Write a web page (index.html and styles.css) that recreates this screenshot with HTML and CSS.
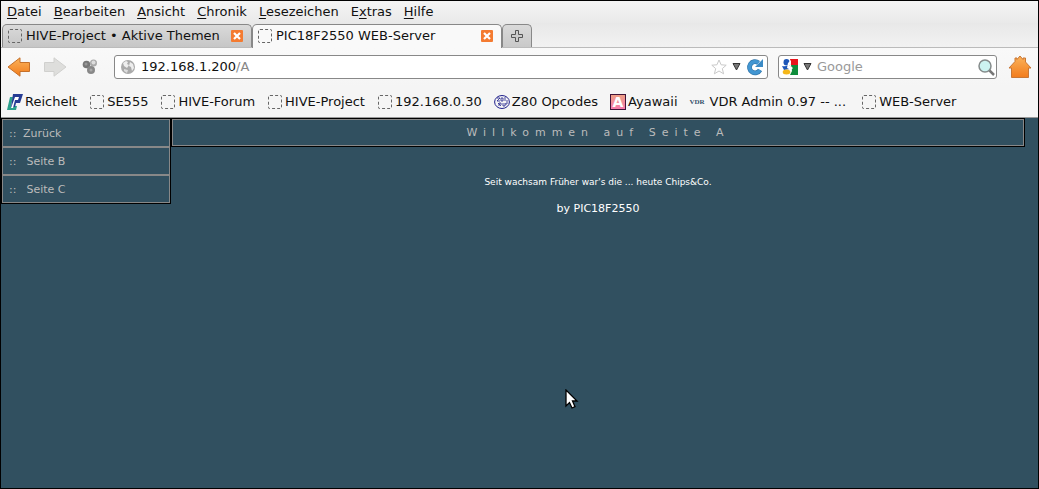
FILE: index.html
```
<!DOCTYPE html>
<html lang="de">
<head>
    <meta charset="UTF-8">
    <meta name="viewport" content="width=device-width, initial-scale=1.0">
    <title>PIC18F2550 WEB-Server</title>
    <link rel="stylesheet" href="styles.css">
</head>
<body>
    <!-- Menu bar -->
    <nav class="menubar">
        <button><u>D</u>atei</button>
        <button><u>B</u>earbeiten</button>
        <button><u>A</u>nsicht</button>
        <button><u>C</u>hronik</button>
        <button><u>L</u>esezeichen</button>
        <button>E<u>x</u>tras</button>
        <button><u>H</u>ilfe</button>
    </nav>

    <!-- Tabs -->
    <div class="tabs">
        <div class="tab">
            <span class="blank-icon"></span>
            <button class="tab-title">HIVE-Project • Aktive Themen</button>
            <button class="close" aria-label="Tab schließen">
                <svg width="12" height="12" viewBox="0 0 12 12"><rect width="12" height="12" rx="1" fill="#f47b31"/><path d="M3 3l6 6M9 3l-6 6" stroke="#fff" stroke-width="2.2"/></svg>
            </button>
        </div>
        <div class="tab active">
            <span class="blank-icon"></span>
            <button class="tab-title">PIC18F2550 WEB-Server</button>
            <button class="close" aria-label="Tab schließen">
                <svg width="12" height="12" viewBox="0 0 12 12"><rect width="12" height="12" rx="1" fill="#f47b31"/><path d="M3 3l6 6M9 3l-6 6" stroke="#fff" stroke-width="2.2"/></svg>
            </button>
        </div>
        <button class="new-tab" aria-label="Neuer Tab">
            <svg width="12" height="12" viewBox="0 0 12 12"><path d="M4.5 .5h3v4h4v3h-4v4h-3v-4h-4v-3h4z" fill="#ccc" stroke="#555"/></svg>
        </button>
    </div>

    <!-- Navigation bar -->
    <div class="navbar">
        <button class="nav-button" aria-label="Zurück">
            <svg width="24" height="20" viewBox="0 0 24 20"><defs><linearGradient id="orange" x2="0" y2="1"><stop offset="0" stop-color="#fbb35b"/><stop offset="1" stop-color="#f27c1c"/></linearGradient></defs><path d="M1 10L13 .8v4.7h9.5v9H13v4.7z" fill="url(#orange)" stroke="#c5702a"/></svg>
        </button>
        <button class="nav-button forward" aria-label="Vor" disabled>
            <svg width="24" height="20" viewBox="0 0 24 20"><path d="M23 10L11 .8v4.7H1.5v9H11v4.7z" fill="#dededc" stroke="#d0d0ce"/></svg>
        </button>
        <button class="nav-button tools" aria-label="Werkzeuge">
            <svg width="16" height="16" viewBox="0 0 16 16"><circle cx="4.5" cy="5.5" r="3.8" fill="#777"/><circle cx="4" cy="5" r="1.5" fill="#999"/><circle cx="11.5" cy="4" r="3.5" fill="#aaa"/><circle cx="11.5" cy="3.5" r="2" fill="#ddd"/><circle cx="9" cy="11" r="4" fill="#888"/><circle cx="9" cy="11" r="1.5" fill="#aaa"/></svg>
        </button>
        <div class="address">
            <svg width="16" height="16" viewBox="0 0 16 16"><circle cx="8" cy="8" r="7" fill="#aaa"/><path d="M3 4l3-2 2 1-1 2 2 1-2 3-3-2zM10 3l3 2 1 4-2 3-1-4-2-1z" fill="#eee"/><path d="M4 10l4 1-1 3-3-2z" fill="#ddd"/></svg>
            <div class="url" role="textbox" contenteditable="true" aria-label="Adresse">192.168.1.200<span>/A</span></div>
            <button aria-label="Lesezeichen setzen">
                <svg width="16" height="16" viewBox="0 0 16 16"><path d="M8 1l2.1 4.8 5.1.4-3.9 3.4 1.3 5.2L8 12l-4.6 2.8 1.3-5.2L.8 6.2l5.1-.4z" fill="#fff" stroke="#c9c9c9"/></svg>
            </button>
            <button aria-label="Verlauf">
                <svg width="9" height="8" viewBox="0 0 9 8"><path d="M1 .5h7L4.5 7z" fill="#777" stroke="#333"/></svg>
            </button>
            <button aria-label="Neu laden">
                <svg width="18" height="18" viewBox="0 0 18 18"><path d="M12.5 4.8A5.6 5.6 0 1 0 14 12" fill="none" stroke="#3579ad" stroke-width="4.8"/><path d="M17 1v8H9z" fill="#3c8bc6"/><path d="M12.5 4.8A5.6 5.6 0 1 0 14 12" fill="none" stroke="#4296d2" stroke-width="3.4"/></svg>
            </button>
        </div>
        <div class="search">
            <svg width="16" height="16" viewBox="0 0 16 16"><path d="M8 0h8v6H9z" fill="#e8141c"/><path d="M9 6h7v10H8l2-4z" fill="#0e8d3c"/><ellipse cx="4.5" cy="3.2" rx="3" ry="3.2" fill="#1b55b8"/><path d="M0 7q3 1 7-1l2 2-1 2-6 1z" fill="#1b55b8"/><path d="M6 4l3-3v4l-2 1 4 3-2 2-4-2z" fill="#fff"/><ellipse cx="4.5" cy="13" rx="3.8" ry="2.5" fill="#f5b719"/></svg>
            <button aria-label="Suchmaschine wählen">
                <svg width="9" height="8" viewBox="0 0 9 8"><path d="M1 .5h7L4.5 7z" fill="#777" stroke="#333"/></svg>
            </button>
            <input type="text" placeholder="Google" aria-label="Suche">
            <button aria-label="Suchen">
                <svg width="18" height="18" viewBox="0 0 18 18"><path d="M12 12l5 5" stroke="#777" stroke-width="2.5"/><circle cx="8" cy="8" r="6" fill="#cdf3f1" stroke="#858b8b" stroke-width="1.5"/></svg>
            </button>
        </div>
        <button class="nav-button home" aria-label="Startseite">
            <svg width="24" height="24" viewBox="0 0 24 24"><path d="M1 13L7 6.5V3h2v1.5L12 1l3 3.5V3h2.500v4L23 13h-2.500v9.500h-17V13z" fill="url(#orange)" stroke="#c97735"/></svg>
        </button>
    </div>

    <!-- Bookmarks -->
    <nav class="bookmarks">
        <a href="#"><svg width="16" height="16" viewBox="0 0 16 16"><path d="M3 3h3L4 12h6l-1 4H0z" fill="#2ba08c"/><path d="M6 0h10l-3 9H9l-1 4H4z" fill="#263c94"/><path d="M8 3h4l-1 3H8l-2 8H4z" fill="#fff"/></svg>Reichelt</a>
        <a href="#"><span class="blank-icon"></span>SE555</a>
        <a href="#"><span class="blank-icon"></span>HIVE-Forum</a>
        <a href="#"><span class="blank-icon"></span>HIVE-Project</a>
        <a href="#"><span class="blank-icon"></span>192.168.0.30</a>
        <a href="#"><svg width="16" height="16" viewBox="0 0 16 16"><g fill="none" stroke="#20208c"><ellipse cx="8" cy="8" rx="7.4" ry="6.5"/><path d="M3 4h3L3 7h3M7 4v3h2V4zM11 3v4M4 9l3 3M5 12V9h2v2M9 9v3h2V9M13 6v4h-2" stroke-width=".8"/></g></svg>Z80 Opcodes</a>
        <a href="#"><svg width="16" height="16" viewBox="0 0 16 16"><defs><linearGradient id="pink" x2="0" y2="1"><stop offset="0" stop-color="#eda184"/><stop offset="1" stop-color="#f779ad"/></linearGradient></defs><rect x=".5" y=".5" width="15" height="15" fill="url(#pink)" stroke="#411337"/><text class="icon-letter" x="8" y="13" text-anchor="middle" fill="#fff">A</text></svg>Ayawaii</a>
        <a href="#" class="vdr"><span class="vdr-icon">VDR</span>VDR Admin 0.97 -- ...</a>
        <a href="#"><span class="blank-icon"></span>WEB-Server</a>
    </nav>

    <!-- Page content -->
    <main class="page">
        <ul class="side-menu">
            <li><a href="#"><span class="marker">::</span> Zurück</a></li>
            <li><a href="#"><span class="marker">::</span>&nbsp; Seite B</a></li>
            <li><a href="#"><span class="marker">::</span>&nbsp; Seite C</a></li>
        </ul>
        <section class="content">
            <h1>Willkommen auf Seite A</h1>
            <p class="slogan">Seit wachsam Früher war's die ... heute Chips&amp;Co.</p>
            <p class="author">by PIC18F2550</p>
        </section>
        <!-- Mouse pointer -->
        <svg class="pointer" width="14" height="21" viewBox="0 0 14 21"><path d="M1 1v16l3.5-3.5L7 19l3-1.3L7.5 12H12z" fill="#fff" stroke="#000" stroke-width="1.3"/></svg>
    </main>
</body>
</html>
```
FILE: styles.css
```
* {
    box-sizing: border-box;
}
body {
    margin: 0;
    min-height: 100vh;
    display: flex;
    flex-direction: column;
    border: 1px solid #000;
    background: #f5f5f5;
    color: #111;
    font: 13px/20px "DejaVu Sans", sans-serif;
}
button, input {
    font: inherit;
    color: inherit;
    background: none;
    border: 0;
    padding: 0;
}
svg {
    display: block;
    flex: none;
}
a {
    color: inherit;
    text-decoration: none;
}
.menubar {
    display: flex;
    gap: 12px;
    height: 22px;
    padding: 0 6px;
    background: linear-gradient(#f4f4f4, #e9e9e9);
}
.menubar u {
    text-underline-offset: 2px;
}
.tabs {
    display: flex;
    height: 25px;
    padding: 1px 1px 0;
    background: linear-gradient(#e8e8e8, #f2f2f2);
    border-bottom: 1px solid #bbb;
}
.tab {
    display: flex;
    align-items: center;
    gap: 4px;
    width: 250px;
    padding: 0 8px 0 5px;
    background: linear-gradient(#dadada, #c6c6c6);
    border: 1px solid #888;
    border-bottom: 0;
    border-radius: 5px 5px 0 0;
}
.tab.active {
    background: #f9f9f9;
    margin-bottom: -1px;
    padding-bottom: 1px;
}
.tab-title {
    flex: 1;
    text-align: left;
    white-space: nowrap;
}
.blank-icon {
    flex: none;
    width: 14px;
    height: 14px;
    border: 1px dashed #666;
    border-radius: 2px;
}
.new-tab {
    display: flex;
    align-items: center;
    justify-content: center;
    width: 30px;
    background: linear-gradient(#dadada, #c9c9c9);
    border: 1px solid #888;
    border-bottom: 0;
    border-radius: 5px 5px 0 0;
}
.navbar {
    display: flex;
    align-items: center;
    height: 39px;
    padding: 0 6px 1px;
    background: linear-gradient(#f9f9f9, #f5f5f5);
}
.forward {
    margin-left: 12px;
}
.tools {
    margin: 0 16px 0 15px;
}
.address, .search {
    display: flex;
    align-items: center;
    height: 24px;
    padding: 0 3px;
    background: #fff;
    border: 1px solid #888;
    border-radius: 3px;
}
.address {
    flex: 1;
    gap: 5px;
    padding-left: 5px;
}
.url {
    flex: 1;
    outline: 0;
}
.url span {
    color: #888;
}
.search {
    width: 219px;
    gap: 5px;
    margin: 0 11px 0 10px;
    padding: 0 1px 0 3px;
}
.search input {
    flex: 1;
    min-width: 0;
    outline: 0;
}
.search input::placeholder {
    color: #999;
}
.bookmarks {
    display: flex;
    align-items: center;
    gap: 12px;
    height: 31px;
    padding: 0 6px 1px;
    border-bottom: 1px solid #999;
    white-space: nowrap;
}
.bookmarks a {
    display: flex;
    align-items: center;
    gap: 2px;
}
.bookmarks .blank-icon {
    margin: 0 1px;
}
.bookmarks .vdr {
    gap: 4px;
    margin-right: 3px;
}
.vdr-icon {
    width: 16px;
    color: #35506b;
    font: bold 7px/16px "Liberation Serif", serif;
}
.icon-letter {
    font-size: 14px;
    font-weight: bold;
}
.page {
    flex: 1;
    position: relative;
    display: flex;
    align-items: flex-start;
    padding-right: 13px;
    background: #315060;
    color: #fff;
    font-size: 11px;
}
.side-menu {
    width: 170px;
    margin: 0;
    padding: 0;
    list-style: none;
    border: 1px solid #000;
}
.side-menu a {
    display: block;
    padding: 4px 6px 2px;
    border: 1px solid #888;
    color: #bbb;
}
.marker {
    margin-right: 3px;
}
.content {
    flex: 1;
    text-align: center;
}
.content h1 {
    margin: 0;
    padding: 4px 3px 3px;
    border: 1px solid #000;
    outline: 1px solid #888;
    outline-offset: -2px;
    color: #bbb;
    font-size: 11px;
    font-weight: normal;
    letter-spacing: 6px;
}
.slogan {
    margin: 25px 0 7px;
    font-size: 9px;
}
.author {
    margin: 0;
}
.pointer {
    position: absolute;
    left: 564px;
    top: 271px;
}
```
